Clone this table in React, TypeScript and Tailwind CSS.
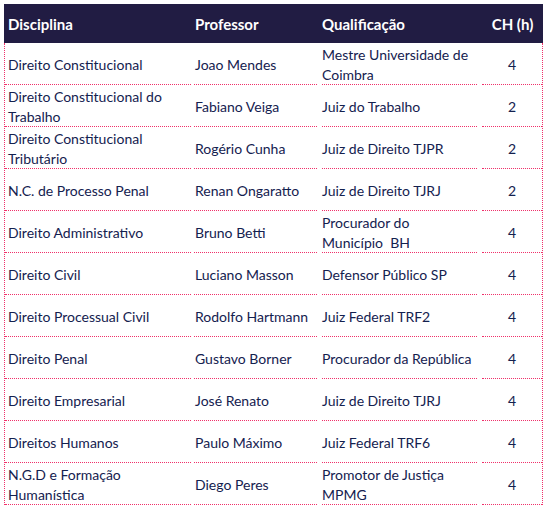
const rows: [string[], string, string[], string][] = [
  [["Direito Constitucional"], "Joao Mendes", ["Mestre Universidade de", "Coimbra"], "4"],
  [["Direito Constitucional do", "Trabalho"], "Fabiano Veiga", ["Juiz do Trabalho"], "2"],
  [["Direito Constitucional", "Tributário"], "Rogério Cunha", ["Juiz de Direito TJPR"], "2"],
  [["N.C. de Processo Penal"], "Renan Ongaratto", ["Juiz de Direito TJRJ"], "2"],
  [["Direito Administrativo"], "Bruno Betti", ["Procurador do", "Município  BH"], "4"],
  [["Direito Civil"], "Luciano Masson", ["Defensor Público SP"], "4"],
  [["Direito Processual Civil"], "Rodolfo Hartmann", ["Juiz Federal TRF2"], "4"],
  [["Direito Penal"], "Gustavo Borner", ["Procurador da República"], "4"],
  [["Direito Empresarial"], "José Renato", ["Juiz de Direito TJRJ"], "4"],
  [["Direitos Humanos"], "Paulo Máximo", ["Juiz Federal TRF6"], "4"],
  [["N.G.D e Formação", "Humanística"], "Diego Peres", ["Promotor de Justiça", "MPMG"], "4"],
];

function Lines({ lines }: { lines: string[] }) {
  return (
    <div className="flex flex-col">
      {lines.map((l, i) => (
        <span key={i} className="whitespace-pre">
          {l}
        </span>
      ))}
    </div>
  );
}

export default function App() {
  return (
    <div
      className="w-[548px] h-[511px] bg-white pt-[4px] pl-[4px]"
      style={{ fontFamily: "Lato, sans-serif" }}
    >
      <div className="w-[539px]">
        <div className="flex h-[39px] items-center pt-[2px] bg-[#211c43] text-white font-bold text-[15px]">
          <div className="w-[187px] pl-[4px]">Disciplina</div>
          <div className="w-[123px] ml-[3px] pl-[1px]">Professor</div>
          <div className="w-[155px] ml-[5px]">Qualificação</div>
          <div className="w-[61px] ml-[5px] text-center">CH (h)</div>
        </div>
        <div className="border-x border-dotted border-[#f0306a] text-[14px] leading-[20px] text-[#14214f]">
          {rows.map(([disc, prof, qual, ch], i) => (
            <div key={i} className="flex h-[42px]">
              <div className="w-[186px] pl-[3px] pt-[3px] flex items-center border-b border-dotted border-[#f0306a]">
                <Lines lines={disc} />
              </div>
              <div className="w-[123px] ml-[3px] pl-[1px] pt-[3px] flex items-center border-b border-dotted border-[#f0306a] whitespace-nowrap">
                {prof}
              </div>
              <div className="w-[155px] ml-[5px] pt-[3px] flex items-center border-b border-dotted border-[#f0306a]">
                <Lines lines={qual} />
              </div>
              <div className="w-[60px] ml-[5px] pt-[3px] flex items-center justify-center border-b border-dotted border-[#f0306a]">
                {ch}
              </div>
            </div>
          ))}
        </div>
      </div>
    </div>
  );
}
